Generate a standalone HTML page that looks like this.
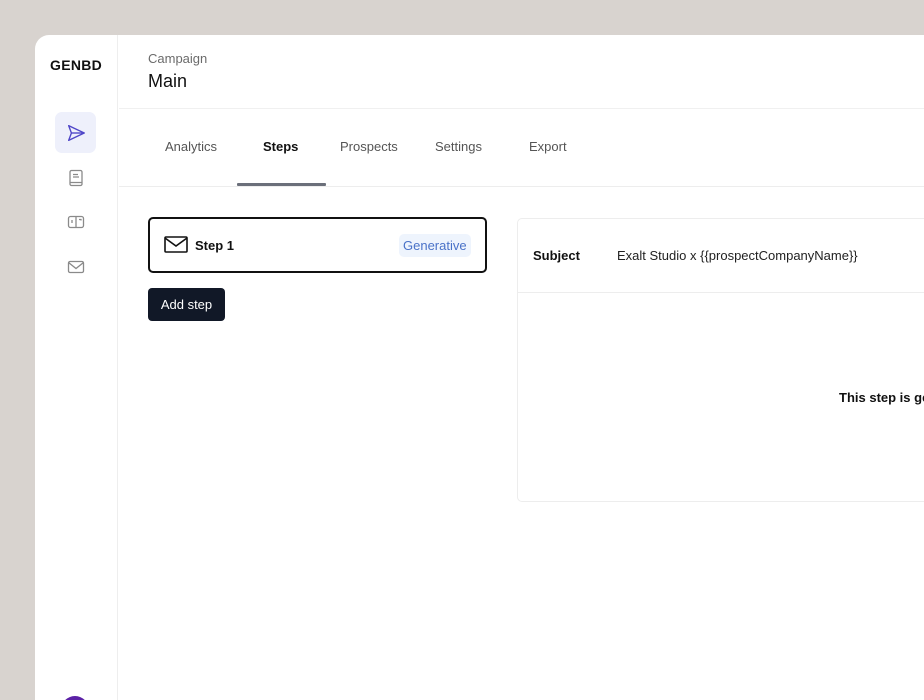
<!DOCTYPE html>
<html style="overflow:hidden;width:924px;height:700px"><head><meta charset="utf-8"><style>
*{box-sizing:border-box;margin:0;padding:0}
body{width:924px;height:700px;overflow:hidden;background:#d8d3cf;font-family:"Liberation Sans",sans-serif;position:relative}
.panel{position:absolute;left:35px;top:35px;width:889px;height:665px;background:#fff;border-top-left-radius:14px;overflow:hidden}
.side{position:absolute;left:0;top:0;width:83px;height:100%;border-right:1px solid #eeeeee}
.logo{position:absolute;left:15px;top:22px;font-weight:bold;font-size:14px;color:#111;letter-spacing:0.3px}
.ic{position:absolute;left:20px;width:41px;height:41px;display:flex;align-items:center;justify-content:center}
.abs{position:absolute}
</style></head><body>
<div class="panel">
 <div class="side">
  <div class="logo">GENBD</div>
  <div class="ic" style="top:77px;background:#eef0fb;border-radius:7px">
   <svg width="22" height="22" viewBox="0 0 24 24" fill="none" stroke="#4f46c8" stroke-width="1.5" stroke-linejoin="round"><path d="M4 4l17 8-17 8 3-8z"/><path d="M7 12h14"/></svg>
  </div>
  <div class="ic" style="top:122px">
   <svg width="18" height="18" viewBox="0 0 18 18" fill="none" stroke="#8a8a8a" stroke-width="1.3"><rect x="3" y="1.5" width="12" height="15" rx="1.5"/><path d="M6 5.5h5M6 8h6M3 13.5h12"/></svg>
  </div>
  <div class="ic" style="top:166px">
   <svg width="18" height="18" viewBox="0 0 18 18" fill="none" stroke="#8a8a8a" stroke-width="1.3"><rect x="1.5" y="3.5" width="15" height="11" rx="2"/><path d="M9 3.5v11M5 7v3M12 6.5h2v1"/></svg>
  </div>
  <div class="ic" style="top:211px">
   <svg width="18" height="18" viewBox="0 0 18 18" fill="none" stroke="#8a8a8a" stroke-width="1.3"><rect x="1.5" y="3.5" width="15" height="11" rx="1.5"/><path d="M1.5 4.5l7.5 6 7.5-6"/></svg>
  </div>
  <div class="abs" style="left:26px;top:661px;width:28px;height:28px;border-radius:50%;background:#5b21a6"></div>
 </div>
 <div class="abs" style="left:113px;top:16px;font-size:13px;color:#6b6b6b">Campaign</div>
 <div class="abs" style="left:113px;top:36px;font-size:18px;color:#111">Main</div>
 <div class="abs" style="left:84px;top:73px;width:820px;border-top:1px solid #f0f0f0"></div>
 <div class="abs" style="left:130px;top:104px;font-size:13px;color:#555">Analytics</div>
 <div class="abs" style="left:228px;top:104px;font-size:13px;color:#111;font-weight:bold">Steps</div>
 <div class="abs" style="left:305px;top:104px;font-size:13px;color:#555">Prospects</div>
 <div class="abs" style="left:400px;top:104px;font-size:13px;color:#555">Settings</div>
 <div class="abs" style="left:494px;top:104px;font-size:13px;color:#555">Export</div>
 <div class="abs" style="left:84px;top:151px;width:820px;border-top:1px solid #ededed"></div>
 <div class="abs" style="left:202px;top:148px;width:89px;height:3px;background:#6b6f7a;border-radius:1px"></div>
 <div class="abs" style="left:113px;top:182px;width:339px;height:56px;border:2px solid #111;border-radius:5px">
  <svg class="abs" style="left:14px;top:16px" width="24" height="20" viewBox="0 0 24 20" fill="none" stroke="#111" stroke-width="1.6"><rect x="1" y="2" width="22" height="15" rx="1"/><path d="M1 3l11 8 11-8"/></svg>
  <div class="abs" style="left:45px;top:19px;font-size:13px;font-weight:bold;color:#111">Step 1</div>
  <div class="abs" style="left:249px;top:15px;padding:4px 4px;font-size:13px;color:#4a72c8;background:#eef4fd;border-radius:5px">Generative</div>
 </div>
 <div class="abs" style="left:113px;top:253px;width:77px;height:33px;background:#111827;border-radius:4px;color:#fff;font-size:13px;line-height:33px;text-align:center">Add step</div>
 <div class="abs" style="left:482px;top:183px;width:460px;height:284px;border:1px solid #ededed;border-radius:5px">
  <div class="abs" style="left:15px;top:29px;font-size:13px;font-weight:bold;color:#111">Subject</div>
  <div class="abs" style="left:99px;top:29px;font-size:13px;color:#222">Exalt Studio x {{prospectCompanyName}}</div>
  <div class="abs" style="left:0;top:73px;width:100%;border-top:1px solid #ededed"></div>
  <div class="abs" style="left:321px;top:171px;font-size:13px;font-weight:bold;color:#111;white-space:nowrap">This step is generative</div>
 </div>
</div>
</body></html>
